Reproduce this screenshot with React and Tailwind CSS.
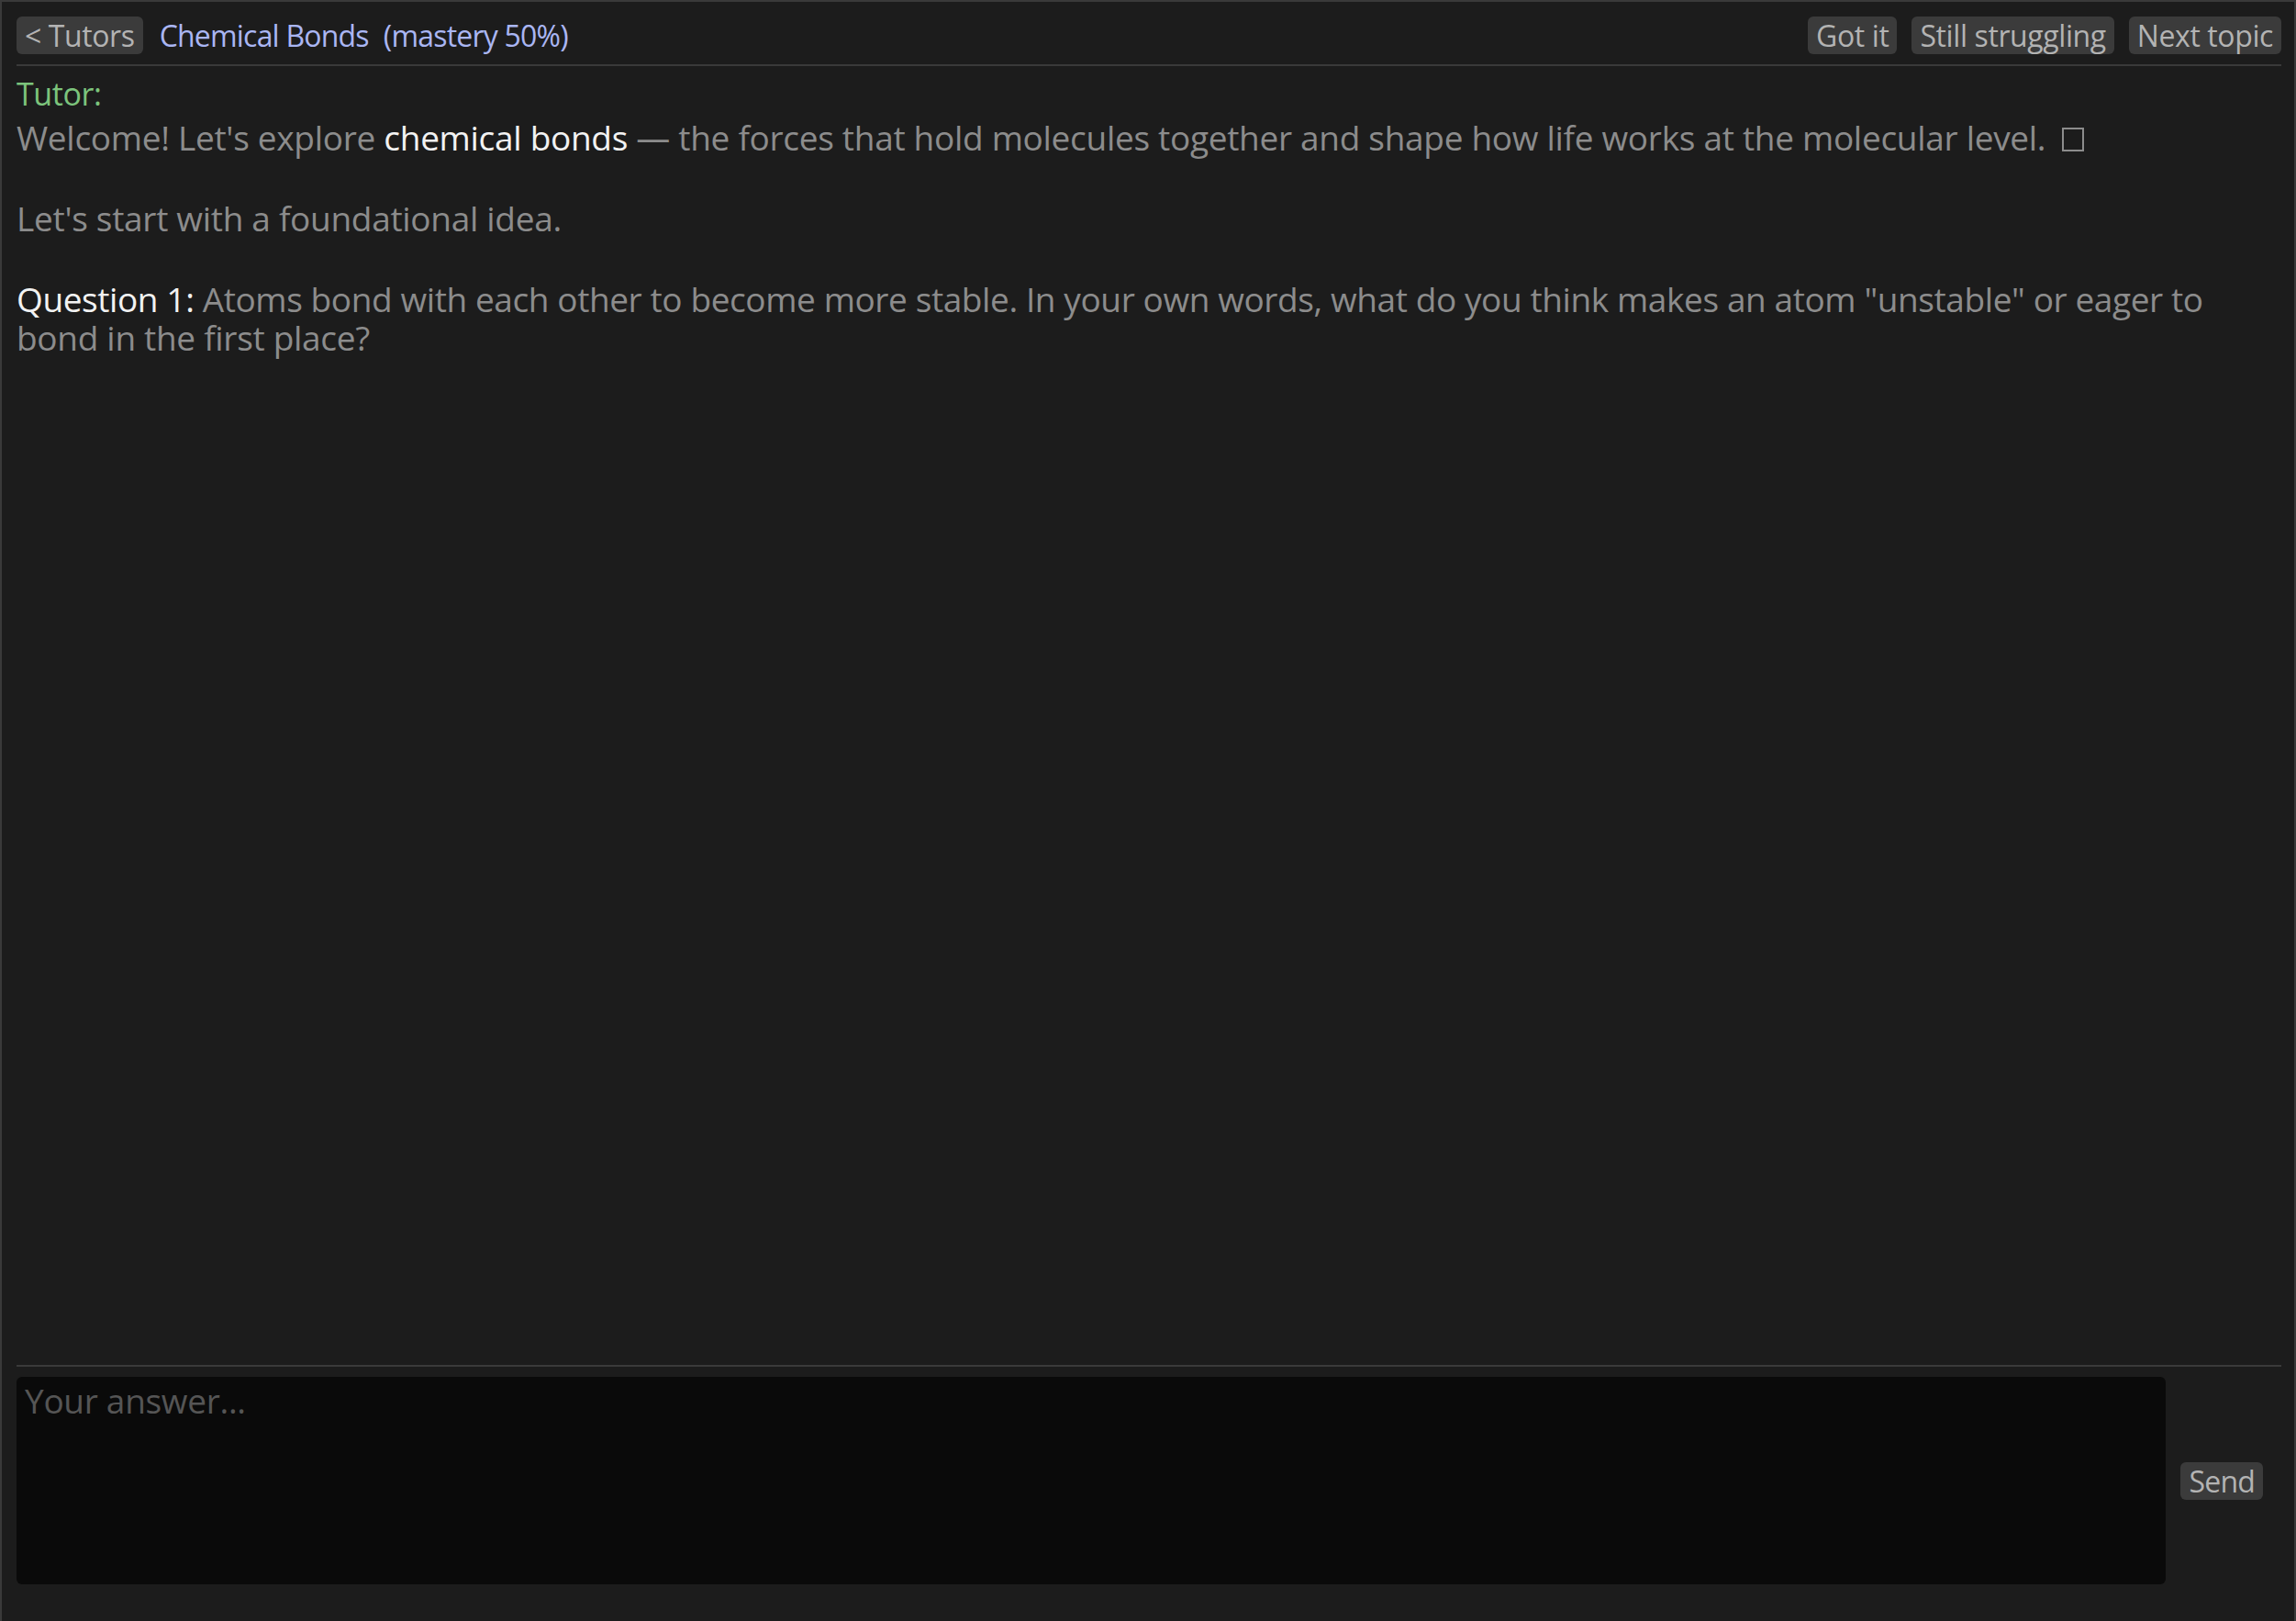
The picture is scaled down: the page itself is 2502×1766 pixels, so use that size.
export default function App() {
  const btn =
    "h-[41px] px-[9px] rounded-md bg-[#3b3b3b] text-[#b3b3b3] text-[32px] leading-[41px] tracking-[-0.4px] whitespace-nowrap";
  return (
    <div className="h-screen flex flex-col bg-[#1c1c1c] border-x-2 border-t-2 border-[#3a3a3a] font-['Open_Sans',sans-serif] overflow-hidden">
      <header className="flex items-center h-[70px] shrink-0 ml-4 mr-[14px] pt-4 pb-[11px] border-b-2 border-[#3a3a3a] leading-[41px]">
        <button className={btn}>&lt; Tutors</button>
        <span className="ml-[18px] text-[32px] tracking-[-0.8px] text-[#aab6f3] whitespace-nowrap">Chemical Bonds</span>
        <span className="ml-[16px] text-[32px] tracking-[-0.8px] text-[#aab6f3] whitespace-nowrap">(mastery 50%)</span>
        <div className="ml-auto flex gap-4">
          <button className={btn}>Got it</button>
          <button className={btn}>Still struggling</button>
          <button className={btn}>Next topic</button>
        </div>
      </header>

      <main className="flex-1 ml-4 mr-[14px] pt-[10px]">
        <div className="text-[34px] leading-[40px] tracking-[-0.4px] text-[#7cc47c]">Tutor:</div>
        <div className="mt-[6px] text-[37px] leading-[44px] tracking-[-0.3px] text-[#8c8c8c] whitespace-nowrap">
          <p>
            Welcome! Let's explore <span className="text-[#f2f2f2]">chemical bonds</span> — the forces that hold
            molecules together and shape how life works at the molecular level.
            <span className="inline-block w-[24px] h-[26px] border-2 border-[#8c8c8c] ml-[18px] align-[-1px]"></span>
          </p>
          <p className="mt-[44px]">Let's start with a foundational idea.</p>
          <p className="mt-[44px] tracking-[-0.4px]">
            <span className="text-[#f2f2f2]">Question 1:</span> Atoms bond with each other to become more stable. In
            your own words, what do you think makes an atom "unstable" or eager to
          </p>
          <p className="-mt-[2px]">bond in the first place?</p>
        </div>
      </main>

      <footer className="flex items-center shrink-0 ml-4 mr-[14px] border-t-2 border-[#3a3a3a] pt-[11px] pb-[40px]">
        <textarea
          placeholder="Your answer..."
          className="flex-1 h-[226px] resize-none rounded-md bg-[#0a0a0a] px-[9px] pt-[4px] text-[37px] leading-[44px] tracking-[-0.3px] text-[#8c8c8c] placeholder:text-[#555555] outline-none border-0"
        ></textarea>
        <button className={btn + " ml-4 mr-[20px] tracking-[-0.8px]"}>Send</button>
      </footer>
    </div>
  );
}
